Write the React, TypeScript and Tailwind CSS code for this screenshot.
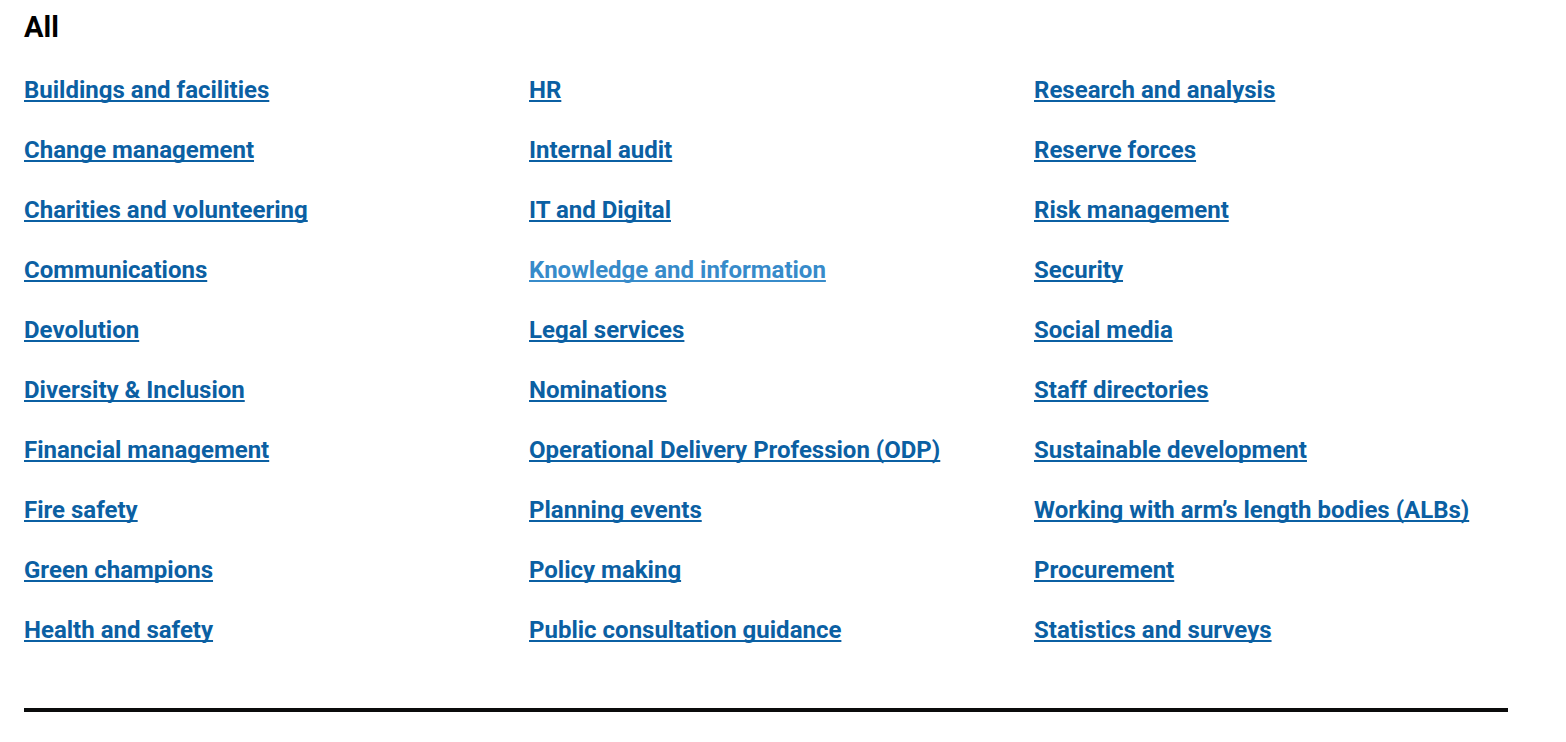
const columns: string[][] = [
  ["Buildings and facilities", "Change management", "Charities and volunteering", "Communications", "Devolution", "Diversity & Inclusion", "Financial management", "Fire safety", "Green champions", "Health and safety"],
  ["HR", "Internal audit", "IT and Digital", "Knowledge and information", "Legal services", "Nominations", "Operational Delivery Profession (ODP)", "Planning events", "Policy making", "Public consultation guidance"],
  ["Research and analysis", "Reserve forces", "Risk management", "Security", "Social media", "Staff directories", "Sustainable development", "Working with arm’s length bodies (ALBs)", "Procurement", "Statistics and surveys"],
];

const highlighted = "Knowledge and information";

export default function App() {
  return (
    <main className="bg-white pt-[9px] pr-[58px] pb-[30px] pl-6 font-['Roboto',sans-serif] font-bold">
      <h1 className="text-[29px] leading-9 text-black">All</h1>
      <nav aria-label="All topics" className="mt-[30px] grid grid-cols-1 gap-x-[31px] gap-y-[30px] md:grid-cols-2 xl:grid-cols-3">
        {columns.map((topics) => (
          <ul key={topics[0]} className="flex flex-col gap-[30px]">
            {topics.map((topic) => (
              <li key={topic} className="text-2xl leading-[30px] xl:whitespace-nowrap">
                <a
                  href="#"
                  className={`underline decoration-2 underline-offset-2 [text-decoration-skip-ink:none] ${topic === highlighted ? "text-[#378bca]" : "text-[#0b60a3]"}`}
                >
                  {topic}
                </a>
              </li>
            ))}
          </ul>
        ))}
      </nav>
      <hr className="mt-[63px] border-t-4 border-[#0b0c0c]" />
    </main>
  );
}
